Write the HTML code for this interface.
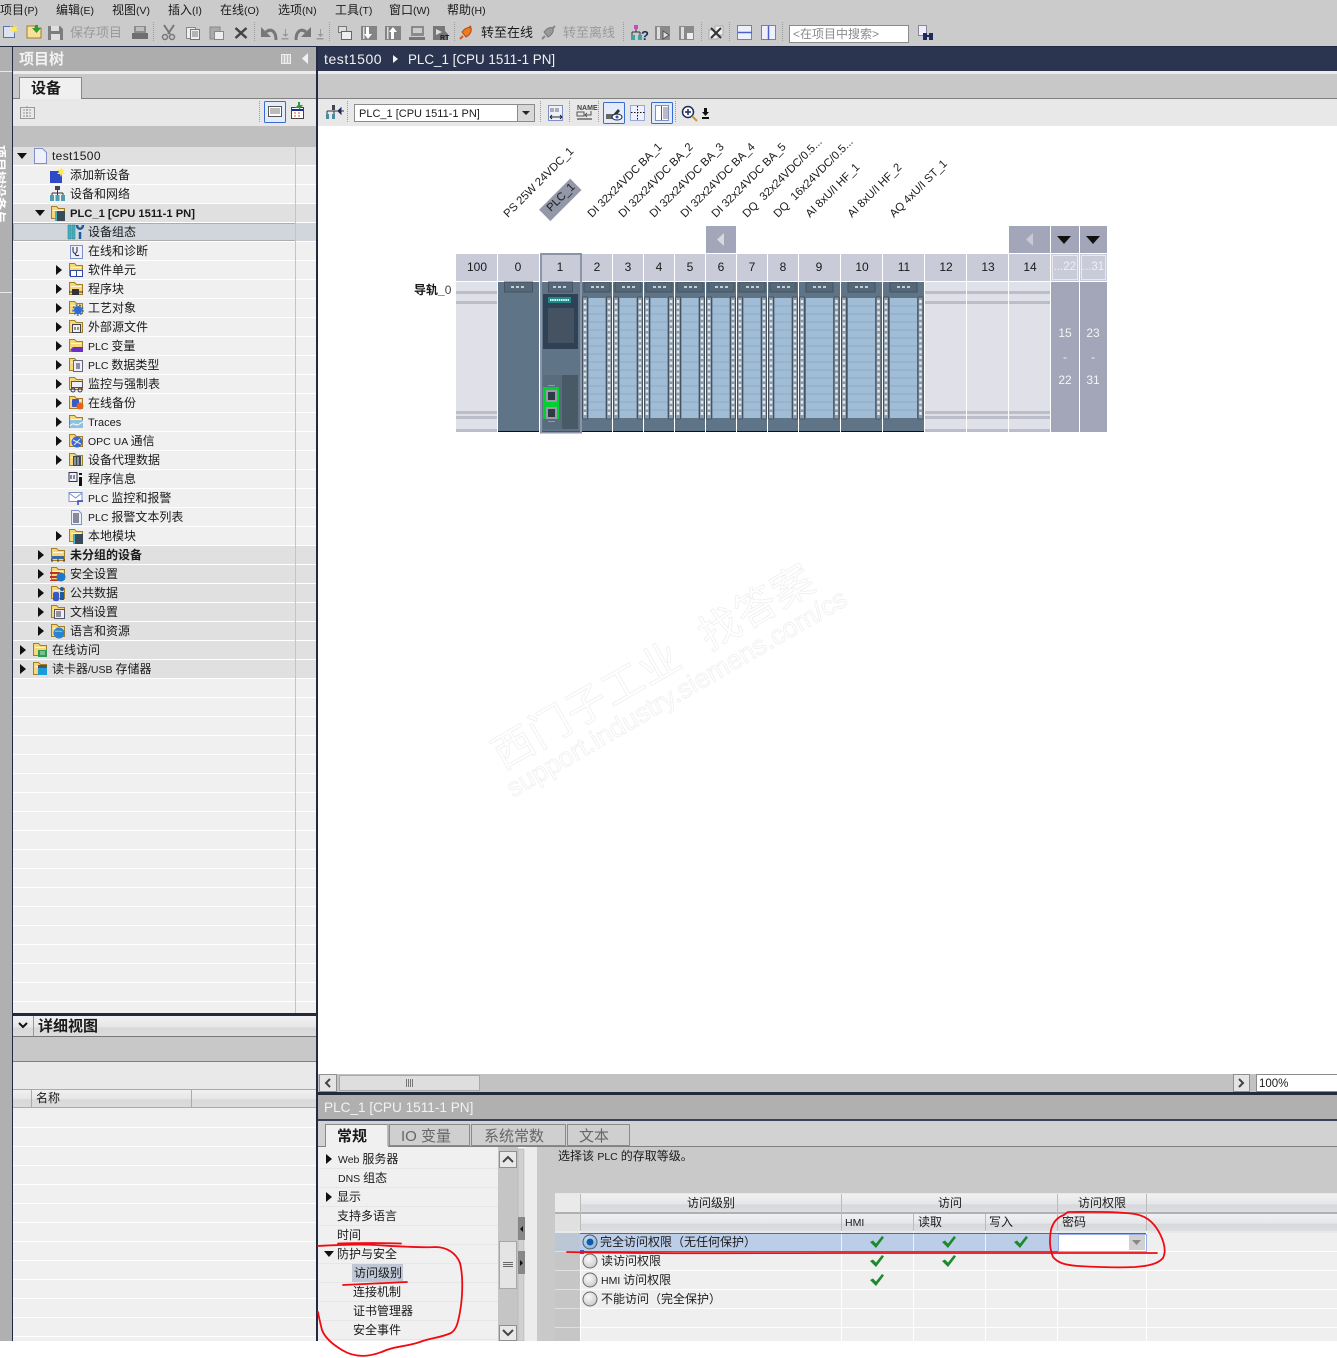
<!DOCTYPE html>
<html lang="zh"><head><meta charset="utf-8"><title>TIA Portal</title>
<style>
html,body{margin:0;padding:0;background:#fff;width:1337px;height:1358px;overflow:hidden}
svg{display:block}
text{font-family:"Liberation Sans","WenQuanYi Zen Hei","Noto Sans CJK SC",sans-serif;font-size:12px;fill:#1a1a1a}
tspan.n{font-size:10.5px}
.m{font-size:12px}
.m tspan{font-size:10.5px}
.g{fill:#9a9a9a;font-size:13px}
.b{font-size:13px}
.h{font-weight:bold;font-size:15px;fill:#f2f2f2}
.l{font-size:11.3px}
.c{text-anchor:middle}
.w{fill:#f2f2f2}
.r{font-size:12px}
</style></head><body>
<svg xmlns="http://www.w3.org/2000/svg" width="1337" height="1358" viewBox="0 0 1337 1358">
<defs>
<clipPath id="sc"><rect x="0" y="47" width="7" height="1294"/></clipPath>
<linearGradient id="hg" x1="0" y1="0" x2="0" y2="1"><stop offset="0" stop-color="#f0f1f3"/><stop offset=".55" stop-color="#e4e6e9"/><stop offset=".6" stop-color="#d6d8dc"/><stop offset="1" stop-color="#dcdee1"/></linearGradient>
<linearGradient id="hb" x1="0" y1="0" x2="0" y2="1"><stop offset="0" stop-color="#f2f2f2"/><stop offset=".55" stop-color="#e6e6e6"/><stop offset=".6" stop-color="#d8d8d8"/><stop offset="1" stop-color="#dcdcdc"/></linearGradient>
<radialGradient id="rd" cx=".4" cy=".35" r=".8"><stop offset="0" stop-color="#fafafa"/><stop offset="1" stop-color="#c2c2c2"/></radialGradient>
<radialGradient id="rs" cx=".4" cy=".35" r=".8"><stop offset="0" stop-color="#cfe4f7"/><stop offset="1" stop-color="#7aa7d0"/></radialGradient>
<symbol id="fo" viewBox="0 0 16 16" width="16" height="16"><path d="M1.500 1.500h5l2 2h6v10h-13z" fill="#f6d87a" stroke="#a47e26"/><path d="M3 5h10v1H3z" fill="#fff6d8"/></symbol>
<symbol id="ar" viewBox="0 0 6 10" width="6" height="10"><path d="M0 0l6 5-6 5z" fill="#111"/></symbol>
<symbol id="ad" viewBox="0 0 10 6" width="10" height="6"><path d="M0 0h10l-5 6z" fill="#111"/></symbol>
<symbol id="ck" viewBox="0 0 14 12" width="14" height="12"><path d="M0 6l3-1.500 3 3L12 0l2 1.500L6 12z" fill="#1c8a2c"/></symbol>
<symbol id="sm" viewBox="0 0 30 150" width="30" height="150">
<rect width="30" height="150" fill="#5f7486"/><rect x="2" y="0" width="26" height="10" fill="#546879" stroke="#44535f"/>
<path d="M9 5h3M14 5h3M19 5h3" stroke="#c4ccd4" stroke-width="2"/>
<rect x=".5" y="15" width="5" height="122" rx="1" fill="#8b9bab" stroke="#44535f"/><rect x="24.500" y="15" width="5" height="122" rx="1" fill="#8b9bab" stroke="#44535f"/>
<path d="M3 18v116M27 18v116" stroke="#e2e7eb" stroke-width="2.500" stroke-dasharray="3 2.600"/>
<rect x="6.500" y="16" width="17" height="120" fill="#a1bdd6"/>
<path d="M6.500 24h17M6.500 32h17M6.500 40h17M6.500 48h17M6.500 56h17M6.500 64h17M6.500 72h17M6.500 80h17M6.500 88h17M6.500 96h17M6.500 104h17M6.500 112h17M6.500 120h17M6.500 128h17" stroke="#8cabc6"/>
<rect y="149" width="30" height="1" fill="#111"/></symbol>
<symbol id="sw" viewBox="0 0 41 150" width="41" height="150">
<rect width="41" height="150" fill="#5f7486"/><rect x="7" y="0" width="27" height="10" fill="#546879" stroke="#44535f"/>
<path d="M14 5h3M19 5h3M24 5h3" stroke="#c4ccd4" stroke-width="2"/>
<rect x=".5" y="15" width="5" height="122" rx="1" fill="#8b9bab" stroke="#44535f"/><rect x="35" y="15" width="5" height="122" rx="1" fill="#8b9bab" stroke="#44535f"/>
<path d="M3 18v116M37.500 18v116" stroke="#e2e7eb" stroke-width="2.500" stroke-dasharray="3 2.600"/>
<rect x="7" y="16" width="27" height="120" fill="#a1bdd6"/>
<path d="M7 24h27M7 32h27M7 40h27M7 48h27M7 56h27M7 64h27M7 72h27M7 80h27M7 88h27M7 96h27M7 104h27M7 112h27M7 120h27M7 128h27" stroke="#8cabc6"/>
<rect y="149" width="41" height="1" fill="#111"/></symbol>
<symbol id="se" viewBox="0 0 41 150" width="41" height="150"><rect width="41" height="150" fill="#dfe0e8"/><path d="M0 10.500h41M0 20.500h41M0 130.500h41M0 135.500h41M0 148.500h41" stroke="#bcbdca" stroke-width="3"/></symbol>
</defs>

<!-- top bars -->
<rect width="1337" height="46" fill="#cbcbcb"/>
<text class="m" x="0" y="14">项目<tspan>(P)</tspan></text><text class="m" x="56" y="14">编辑<tspan>(E)</tspan></text><text class="m" x="112" y="14">视图<tspan>(V)</tspan></text><text class="m" x="168" y="14">插入<tspan>(I)</tspan></text><text class="m" x="220" y="14">在线<tspan>(O)</tspan></text><text class="m" x="278" y="14">选项<tspan>(N)</tspan></text><text class="m" x="335" y="14">工具<tspan>(T)</tspan></text><text class="m" x="389" y="14">窗口<tspan>(W)</tspan></text><text class="m" x="447" y="14">帮助<tspan>(H)</tspan></text>

<!-- toolbar icons -->
<path d="M3.500 26.500h11v11h-11z" fill="#dbe3f5" stroke="#5b6fb8"/><path d="M14 24l1 3 3-1-2 3 2 2-3 0-1 3-1-3-3 0 2-2-2-3 3 1z" fill="#ffe94d"/>
<path d="M27 26h7l2 2h5v10H27z" fill="#f7e09a" stroke="#a47e26"/><path d="M35 25h3v3h3l-4.500 5-4.500-5h3z" fill="#2f9a35"/>
<path d="M48 26h12l3 3v11H48z" fill="#7d7d7d"/><rect x="51" y="26" width="8" height="5" fill="#dedede"/><rect x="51" y="34" width="9" height="6" fill="#dedede"/>
<text class="g" x="70" y="37">保存项目</text>
<rect x="134" y="26" width="12" height="7" fill="#8d8d8d"/><rect x="132" y="33" width="16" height="6" fill="#6f6f6f"/><path d="M136 28h8M136 30h8" stroke="#eee"/>
<path d="M153.500 22v20M254.500 22v20M329.500 22v20M454.500 22v20M623.500 22v20M701.500 22v20M729.500 22v20M782.500 22v20" stroke="#9c9c9c" stroke-dasharray="1 1"/>
<path d="M164 25l6 9M174 25l-6 9" stroke="#777" stroke-width="2"/><circle cx="165" cy="37" r="2.500" fill="none" stroke="#777" stroke-width="1.500"/><circle cx="172" cy="37" r="2.500" fill="none" stroke="#777" stroke-width="1.500"/>
<rect x="186.500" y="27.500" width="9" height="11" fill="#eee" stroke="#888"/><rect x="190.500" y="29.500" width="9" height="10" fill="#eee" stroke="#777"/><path d="M192 32h6M192 34h6M192 36h6" stroke="#777"/>
<rect x="210" y="27" width="10" height="12" fill="#aaa" stroke="#888"/><rect x="214.500" y="31.500" width="9" height="8" fill="#eee" stroke="#888"/>
<path d="M235.500 28l11 10M246.500 28l-11 10" stroke="#444" stroke-width="2.500"/>
<path d="M261 27v10h10z" fill="#777"/><path d="M266 32c5-4 10-1 10 8" stroke="#777" stroke-width="3" fill="none"/><path d="M285 29v5h-2.500l3 3 3-3H286v-5zM281.500 38h7v1.500h-7z" fill="#999"/>
<path d="M311 27v10h-10z" fill="#777"/><path d="M306 32c-5-4-10-1-10 8" stroke="#777" stroke-width="3" fill="none"/><path d="M320 29v5h-2.500l3 3 3-3H321v-5zM316.500 38h7v1.500h-7z" fill="#999"/>
<rect x="338.500" y="26.500" width="8" height="6" fill="#ddd" stroke="#777"/><rect x="341.500" y="31.500" width="10" height="8" fill="#eee" stroke="#666"/>
<rect x="361" y="26" width="16" height="14" fill="#848484"/><path d="M366 27h3v7h3l-4 5-4-5h2z" fill="#fff"/><rect x="363" y="27" width="1.500" height="12" fill="#ddd"/>
<rect x="385" y="26" width="16" height="14" fill="#848484"/><path d="M391 39h3v-7h3l-4-5-4 5h2z" fill="#fff"/><rect x="387" y="27" width="1.500" height="12" fill="#ddd"/>
<rect x="411" y="26" width="13" height="10" fill="#8a8a8a"/><rect x="413" y="28" width="9" height="5" fill="#ccc"/><rect x="409" y="37" width="16" height="3" fill="#777"/>
<path d="M433 26h12v5l3 3v6H433z" fill="#777"/><path d="M436 29l6 3-6 3z" fill="#ddd"/><text x="440" y="40" style="font-size:7px;font-weight:bold" fill="#222">RT</text>
<path d="M460 39l3-3M471 26l-3 3" stroke="#d85a10" stroke-width="2"/><path d="M462 32c3-4 6-5 9-4 1 3-1 7-5 9z" fill="#f07a20" stroke="#b34a10"/>
<text class="b" x="481" y="37">转至在线</text>
<path d="M542 39l3-3M555 26l-3 3" stroke="#888" stroke-width="2"/><path d="M544 32c3-4 6-5 9-4 1 3-1 7-5 9z" fill="#999" stroke="#777"/>
<text class="g" x="563" y="37">转至离线</text>
<rect x="634" y="25" width="4" height="4" fill="#c44fc4"/><path d="M636 29v3M632 32h8M632 32v3M640 32v3" stroke="#333"/><rect x="631" y="35" width="4" height="5" fill="#3aa5a5"/><rect x="638" y="35" width="4" height="5" fill="#3aa5a5"/><text x="641" y="40" style="font-size:13px;font-weight:bold;fill:#1d2a5a">?</text>
<rect x="655" y="26" width="15" height="14" fill="#8a8a8a"/><rect x="657" y="27" width="3" height="12" fill="#ddd"/><path d="M663 31l6 4-6 4z" fill="#ddd" stroke="#555"/>
<rect x="679" y="26" width="15" height="14" fill="#8a8a8a"/><rect x="681" y="27" width="3" height="12" fill="#ddd"/><rect x="687" y="33" width="6" height="6" fill="#eee"/>
<rect x="709" y="30" width="9" height="9" fill="#eee" stroke="#aaa"/><rect x="715" y="26" width="8" height="9" fill="#eee" stroke="#aaa"/><path d="M711 28l10 10M721 28l-10 10" stroke="#333" stroke-width="2"/>
<rect x="737.500" y="25.500" width="14" height="14" fill="#eef1fb" stroke="#6b7ed0"/><path d="M738 32.500h14" stroke="#4a5fc8" stroke-width="1.500"/>
<rect x="761.500" y="25.500" width="14" height="14" fill="#eef1fb" stroke="#6b7ed0"/><path d="M768.500 26v14" stroke="#4a5fc8" stroke-width="1.500"/>
<rect x="789.500" y="25.500" width="119" height="17" fill="#fff" stroke="#8b8b8b"/><text x="793" y="38" style="fill:#8a8a8a;font-size:12px">&lt;在项目中搜索&gt;</text>
<rect x="918.500" y="25.500" width="8" height="10" fill="#eef" stroke="#889"/><path d="M923 33h4v7h-4zM929 33h4v7h-4z" fill="#1d2a5a"/><rect x="926" y="35" width="4" height="2" fill="#1d2a5a"/>

<!-- dark top line -->
<rect y="46" width="1337" height="1" fill="#232a40"/>

<!-- left strip -->
<rect x="0" y="47" width="12" height="1294" fill="#b0b0b0"/><rect x="12" y="47" width="1" height="1294" fill="#232a40"/>
<rect x="0" y="71" width="12" height="1" fill="#e8e8e8"/><rect x="0" y="292" width="12" height="1" fill="#e8e8e8"/>
<g clip-path="url(#sc)"><g transform="translate(-5,145) rotate(90)"><text y="0" x="0" style="font-size:13px;font-weight:bold;fill:#fff">项目树设备与</text></g></g>

<!-- project tree header -->
<rect x="13" y="47" width="303" height="24" fill="#adadad"/>
<text class="h" x="19" y="64">项目树</text>
<rect x="281.500" y="54.500" width="9" height="9" fill="#c8c8c8" stroke="#eee"/><path d="M284.500 55v8M287.500 55v8" stroke="#eee"/>
<path d="M308 53v11l-6-5.500z" fill="#f2f2f2"/>
<rect x="13" y="71" width="303" height="3" fill="#ececec"/>
<rect x="13" y="74" width="303" height="24" fill="#c8c8c8"/>
<path d="M19.500 98V77.500h62V98" fill="#f0f0f0" stroke="#8a8a8a"/>
<text x="31" y="93" style="font-size:15px;font-weight:bold">设备</text>
<rect x="13" y="98" width="303" height="1" fill="#808080"/><rect x="20" y="98" width="61" height="1" fill="#f0f0f0"/>
<rect x="13" y="99" width="303" height="27" fill="#e8e8e8"/>
<rect x="20.500" y="107.500" width="14" height="11" fill="#e8e8e8" stroke="#999"/><path d="M23 110h9M23 113h9M23 116h9M27 106v12" stroke="#999" stroke-dasharray="2 1"/>
<rect x="264.500" y="101.500" width="21" height="21" rx="1" fill="#e3ecfa" stroke="#3a6bd0"/><rect x="268.500" y="106.500" width="13" height="10" fill="#fff" stroke="#555"/><path d="M270 109h10M270 111h10M270 113h10" stroke="#777"/>
<path d="M259.500 101v22" stroke="#999" stroke-dasharray="1 1"/>
<rect x="291.500" y="107.500" width="12" height="11" fill="#fff" stroke="#444"/><path d="M292 110h11" stroke="#1d2a9a" stroke-width="2"/><path d="M294 113h2M298 113h2M294 116h2M298 116h2" stroke="#d85a10"/><path d="M298 102h2v3h3l-4 5 0-2-4 0 3-3z" fill="#2f9a35"/>
<rect x="13" y="126" width="303" height="21" fill="#c0c0c0"/>

<!-- tree rows -->
<rect x="13" y="147" width="303" height="866" fill="#f0f0f0"/>
<g fill="#e0e0e0"><rect x="13" y="147" width="303" height="18"/><rect x="13" y="204" width="303" height="18"/>
<rect x="13" y="546" width="303" height="18"/><rect x="13" y="565" width="303" height="18"/><rect x="13" y="584" width="303" height="18"/><rect x="13" y="603" width="303" height="18"/><rect x="13" y="622" width="303" height="18"/><rect x="13" y="641" width="303" height="18"/><rect x="13" y="660" width="303" height="18"/></g>
<rect x="13.500" y="223.500" width="282" height="17" fill="#d0d6dc"/><rect x="296" y="223" width="20" height="18" fill="#d0d6dc"/><rect x="13.500" y="223.500" width="282" height="17" fill="none" stroke="#777" stroke-dasharray="1 1"/>
<path d="M13 165.500h303M13 184.500h303M13 203.500h303M13 222.500h303M13 241.500h303M13 260.500h303M13 279.500h303M13 298.500h303M13 317.500h303M13 336.500h303M13 355.500h303M13 374.500h303M13 393.500h303M13 412.500h303M13 431.500h303M13 450.500h303M13 469.500h303M13 488.500h303M13 507.500h303M13 526.500h303M13 545.500h303M13 564.500h303M13 583.500h303M13 602.500h303M13 621.500h303M13 640.500h303M13 659.500h303M13 678.500h303M13 697.500h303M13 716.500h303M13 735.500h303M13 754.500h303M13 773.500h303M13 792.500h303M13 811.500h303M13 830.500h303M13 849.500h303M13 868.500h303M13 887.500h303M13 906.500h303M13 925.500h303M13 944.500h303M13 963.500h303M13 982.500h303M13 1001.500h303" stroke="#fff"/>
<rect x="295" y="147" width="1" height="866" fill="#c4c4c4"/>

<!-- arrows -->
<use href="#ad" x="17" y="153"/><use href="#ad" x="35" y="210"/>
<use href="#ar" x="56" y="265"/><use href="#ar" x="56" y="284"/><use href="#ar" x="56" y="303"/><use href="#ar" x="56" y="322"/><use href="#ar" x="56" y="341"/><use href="#ar" x="56" y="360"/><use href="#ar" x="56" y="379"/><use href="#ar" x="56" y="398"/><use href="#ar" x="56" y="417"/><use href="#ar" x="56" y="436"/><use href="#ar" x="56" y="455"/><use href="#ar" x="56" y="531"/>
<use href="#ar" x="38" y="550"/><use href="#ar" x="38" y="569"/><use href="#ar" x="38" y="588"/><use href="#ar" x="38" y="607"/><use href="#ar" x="38" y="626"/><use href="#ar" x="20" y="645"/><use href="#ar" x="20" y="664"/>

<!-- tree icons -->
<path d="M34.500 148.500h8l4 4v11h-12z" fill="#eef1fb" stroke="#7f8fc8"/>
<rect x="50" y="171" width="12" height="12" fill="#2f49c8"/><path d="M61 167l1 3 3-1-2 3 2 2-3 0-1 3-1-3-3 0 2-2-2-3 3 1z" fill="#ffe94d"/>
<rect x="55" y="186" width="5" height="4" fill="#445"/><path d="M57.500 190v3M52 193h11M52 193v2M57.500 193v2M63 193v2" stroke="#333"/><rect x="50" y="195" width="4" height="6" fill="#4aa0b0"/><rect x="55.500" y="195" width="4" height="6" fill="#4aa0b0"/><rect x="61" y="195" width="4" height="6" fill="#4aa0b0"/>
<use href="#fo" x="50" y="205"/><rect x="55" y="211" width="10" height="10" fill="#3b4a58"/><rect x="55" y="211" width="2" height="10" fill="#46b0c0"/>
<rect x="68" y="225" width="3" height="14" fill="#46b0c0" stroke="#2a7080" stroke-width=".5"/><rect x="72" y="225" width="3" height="14" fill="#46b0c0" stroke="#2a7080" stroke-width=".5"/><path d="M80 232v7M77 225c0 5 6 5 6 0" stroke="#1d5aa0" stroke-width="2.500" fill="none"/>
<rect x="70.500" y="245.500" width="12" height="13" fill="#eef1fb" stroke="#7f8fc8"/><path d="M73 247v4c0 3 4 3 4 0v-4M75 253c0 3 3 3 4 2" stroke="#223" fill="none"/>
<use href="#fo" x="68" y="262"/><rect x="70.500" y="270.500" width="6" height="6" fill="#fff" stroke="#2f49a8"/><rect x="76.500" y="270.500" width="6" height="6" fill="#fff" stroke="#2f49a8"/>
<use href="#fo" x="68" y="281"/><rect x="72" y="289" width="7" height="6" fill="#333"/><path d="M69 292h14" stroke="#333"/>
<use href="#fo" x="68" y="300"/><circle cx="78" cy="310" r="4" fill="#2f6ad0"/><circle cx="78" cy="310" r="5" fill="none" stroke="#2f6ad0" stroke-dasharray="2 1.500" stroke-width="1.500"/>
<use href="#fo" x="68" y="319"/><rect x="72.500" y="324.500" width="8" height="8" fill="#eee" stroke="#444"/><path d="M75 327v3M78 327v3" stroke="#333"/>
<use href="#fo" x="68" y="338"/><path d="M73 347h6l4 0v5h-10l-3-2z" fill="#6a2fc0"/>
<use href="#fo" x="68" y="357"/><rect x="73.500" y="360.500" width="9" height="11" fill="#eef" stroke="#667"/><path d="M77 363v6M79 363v6" stroke="#334"/>
<use href="#fo" x="68" y="376"/><rect x="71.500" y="381.500" width="11" height="6" fill="#eef" stroke="#556"/><circle cx="73" cy="390" r="2" fill="none" stroke="#335"/><circle cx="80" cy="390" r="2" fill="none" stroke="#335"/>
<use href="#fo" x="68" y="395"/><rect x="72" y="399" width="7" height="8" rx="1" fill="#3a58c8"/><circle cx="80" cy="406" r="3.500" fill="#e8601c"/>
<use href="#fo" x="68" y="414"/><rect x="70" y="420" width="13" height="8" fill="#8fc0e0"/><path d="M70 426c3-4 5-1 7-1 2 0 3-2 6-3" stroke="#fff" fill="none"/>
<use href="#fo" x="68" y="433"/><circle cx="77" cy="442" r="5.500" fill="#3a68d0"/><path d="M73 440l8 4M74 445l6-6" stroke="#dfe8f8"/>
<use href="#fo" x="68" y="452"/><rect x="73" y="456" width="8" height="10" fill="#3b4a58"/><path d="M75 457v8M78 457v8" stroke="#dcdcdc"/>
<rect x="69" y="472.500" width="8" height="9" fill="#eef" stroke="#334"/><path d="M71 475v4M74 475v4" stroke="#223"/><rect x="79" y="477" width="3" height="9" fill="#111"/><rect x="79" y="473" width="3" height="2" fill="#111"/>
<path d="M69 492.500h13v9H69z" fill="#fff" stroke="#7f8fc8"/><path d="M69 493l6.500 5 6.500-5" stroke="#7f8fc8" fill="none"/><path d="M78 505v-4h5" stroke="#2f49c8" fill="none" stroke-width="1.500"/>
<path d="M71.500 510.500h7l3 3v11h-10z" fill="#eef1fb" stroke="#7f8fc8"/><path d="M73 514h6M73 516h6M73 518h6M73 520h6M73 522h6" stroke="#223"/>
<use href="#fo" x="68" y="528"/><rect x="73" y="534" width="10" height="10" fill="#3b4a58"/><rect x="73" y="534" width="2" height="10" fill="#46b0c0"/>
<use href="#fo" x="50" y="547"/><rect x="52" y="556" width="12" height="3" fill="#3a6aa0"/><path d="M52 559v3M58 559v3M64 559v3" stroke="#333"/>
<use href="#fo" x="50" y="566"/><path d="M50 572h10v2H50zM50 576h10v2H50zM50 580h10v1H50z" fill="#b8322a"/><circle cx="61" cy="577" r="4.500" fill="#1d7ac8"/>
<use href="#fo" x="50" y="585"/><rect x="53" y="592" width="6" height="9" rx="2" fill="#3a58c8"/><circle cx="62" cy="589" r="2" fill="#1d5aa0"/><rect x="60" y="592" width="4" height="8" fill="#1d5aa0"/>
<use href="#fo" x="50" y="604"/><rect x="54.500" y="609.500" width="10" height="9" fill="#eef" stroke="#556"/><path d="M56 612h5M56 614h5M56 616h5" stroke="#334"/>
<use href="#fo" x="50" y="623"/><circle cx="59" cy="633" r="5.500" fill="#2a82d0"/><path d="M55 631c2 1 5-1 7 1" stroke="#8fd8a0" fill="none"/>
<use href="#fo" x="32" y="642"/><rect x="38" y="650" width="9" height="7" fill="#2f9a55"/><path d="M40 652h5M40 654h5" stroke="#bfe8c8"/>
<use href="#fo" x="32" y="661"/><rect x="38" y="665" width="9" height="3" fill="#555"/><rect x="38" y="668" width="9" height="7" fill="#1d9ad8"/>

<!-- tree text -->
<text class="r" x="52" y="160" style="letter-spacing:.35px">test1500</text>
<text class="r" x="70" y="179">添加新设备</text><text class="r" x="70" y="198">设备和网络</text>
<text class="r" x="70" y="217" style="font-size:11.2px;font-weight:bold">PLC_1 [CPU 1511-1 PN]</text>
<text class="r" x="88" y="236">设备组态</text><text class="r" x="88" y="255">在线和诊断</text><text class="r" x="88" y="274">软件单元</text><text class="r" x="88" y="293">程序块</text><text class="r" x="88" y="312">工艺对象</text><text class="r" x="88" y="331">外部源文件</text><text class="r" x="88" y="350"><tspan class="n">PLC </tspan>变量</text><text class="r" x="88" y="369"><tspan class="n">PLC </tspan>数据类型</text><text class="r" x="88" y="388">监控与强制表</text><text class="r" x="88" y="407">在线备份</text><text class="r" x="88" y="426" style="font-size:11px">Traces</text><text class="r" x="88" y="445"><tspan class="n">OPC UA </tspan>通信</text><text class="r" x="88" y="464">设备代理数据</text><text class="r" x="88" y="483">程序信息</text><text class="r" x="88" y="502"><tspan class="n">PLC </tspan>监控和报警</text><text class="r" x="88" y="521"><tspan class="n">PLC </tspan>报警文本列表</text><text class="r" x="88" y="540">本地模块</text>
<text class="r" x="70" y="559" style="font-weight:bold">未分组的设备</text><text class="r" x="70" y="578">安全设置</text><text class="r" x="70" y="597">公共数据</text><text class="r" x="70" y="616">文档设置</text><text class="r" x="70" y="635">语言和资源</text>
<text class="r" x="52" y="654">在线访问</text><text class="r" x="52" y="673">读卡器<tspan class="n">/USB </tspan>存储器</text>

<!-- detail view -->
<rect x="13" y="1013" width="305" height="3" fill="#232a40"/>
<rect x="13" y="1016" width="303" height="20" fill="url(#hb)"/><rect x="33" y="1016" width="1" height="20" fill="#999"/>
<path d="M19 1023l4 4 4-4" stroke="#111" stroke-width="2" fill="none"/>
<text x="38" y="1031" style="font-size:15px;font-weight:bold">详细视图</text>
<rect x="13" y="1036" width="303" height="25" fill="#c8c8c8"/><rect x="13" y="1036" width="303" height="1" fill="#777"/><rect x="13" y="1061" width="303" height="1" fill="#808080"/>
<rect x="13" y="1062" width="303" height="27" fill="#e9e9e9"/>
<rect x="13" y="1089" width="303" height="18" fill="url(#hb)"/><path d="M13 1089.500h303M13 1107.500h303" stroke="#aaa"/><path d="M31.500 1089v18M191.500 1089v18" stroke="#aaa"/>
<text x="36" y="1102">名称</text>
<rect x="13" y="1108" width="303" height="233" fill="#f0f0f0"/>
<path d="M13 1127.500h303M13 1146.500h303M13 1165.500h303M13 1184.500h303M13 1203.500h303M13 1222.500h303M13 1241.500h303M13 1260.500h303M13 1279.500h303M13 1298.500h303M13 1317.500h303M13 1336.500h303" stroke="#fff"/>

<!-- vertical divider -->
<rect x="316" y="47" width="2" height="1294" fill="#232a40"/>

<!-- editor header -->
<rect x="318" y="47" width="1019" height="24" fill="#2b3550"/>
<text x="324" y="64" style="font-size:14px;fill:#f2f2f2;letter-spacing:.55px">test1500</text><path d="M393 55l5 4-5 4z" fill="#f2f2f2"/><text x="408" y="64" style="font-size:13.4px;fill:#f2f2f2">PLC_1 [CPU 1511-1 PN]</text>
<rect x="318" y="71" width="1019" height="3" fill="#ececec"/>
<rect x="318" y="74" width="1019" height="24" fill="#c8c8c8"/><rect x="318" y="98" width="1019" height="1" fill="#808080"/>
<rect x="318" y="99" width="1019" height="27" fill="#e8e8e8"/>
<!-- editor toolbar -->
<rect x="332" y="105" width="3" height="5" fill="#445"/><path d="M327 111h14M327 111v3M334 111v3M341 111v3" stroke="#333"/><rect x="326" y="114" width="3" height="5" fill="#4a8a9a"/><rect x="332" y="114" width="3" height="5" fill="#4a8a9a"/><path d="M344 111h-6l3-3v6l-3-3" fill="#1d2a5a" stroke="#1d2a5a"/>
<path d="M347.500 101v22M540.500 101v22M569.500 101v22M598.500 101v22M675.500 101v22" stroke="#999" stroke-dasharray="1 1"/>
<rect x="354.500" y="104.500" width="180" height="17" fill="#fff" stroke="#8b8b8b"/>
<text x="359" y="117" style="font-size:11px">PLC_1 [CPU 1511-1 PN]</text>
<rect x="518" y="105" width="16" height="16" fill="#d8d8d8"/><rect x="517.500" y="104.500" width="17" height="17" fill="none" stroke="#8b8b8b"/><path d="M522 111h8l-4 4z" fill="#222"/>
<rect x="548.500" y="105.500" width="14" height="15" fill="#eef1fb" stroke="#7f8fc8"/><path d="M551 108v4M553 108v4M556 108v4M558 108v4" stroke="#667"/><path d="M550 117h12M550 117l2-2M550 117l2 2M562 117l-2-2M562 117l-2 2" stroke="#222" fill="none"/>
<text x="577" y="110" style="font-size:7px;font-weight:bold;fill:#444">NAME</text><path d="M577 112h7v4h-7zM591 111v4h-6l2-2M585 115l2 2" fill="none" stroke="#555"/><rect x="577" y="118" width="15" height="2" fill="#888"/>
<rect x="603.500" y="102.500" width="21" height="21" rx="1" fill="#e3ecfa" stroke="#3a6bd0"/><path d="M606 117l6-1 6-7 2 2-6 7z" fill="#333"/><rect x="606" y="114" width="12" height="5" fill="#666"/><ellipse cx="617" cy="117" rx="5" ry="3" fill="#fff" stroke="#223"/><circle cx="617" cy="117" r="1.500" fill="#1d5ad0"/>
<rect x="630.500" y="105.500" width="14" height="15" fill="#eef1fb" stroke="#9aa7d8"/><path d="M631 112.500h14M637.500 106v15" stroke="#111" stroke-dasharray="1.500 1.500"/>
<rect x="651.500" y="102.500" width="21" height="21" rx="1" fill="#e3ecfa" stroke="#3a6bd0"/><rect x="655.500" y="105.500" width="13" height="15" fill="#fff" stroke="#7f8fc8"/><path d="M661.500 106v14" stroke="#556"/><path d="M663 108h5M663 110h5M663 112h5M663 114h5M663 116h5M663 118h5" stroke="#778"/>
<circle cx="688" cy="112" r="5.500" fill="#fff" stroke="#1d2a5a" stroke-width="1.500"/><path d="M685 112h6M688 109v6" stroke="#1d2a5a" stroke-width="1.500"/><path d="M692 116l5 5" stroke="#c89a30" stroke-width="2"/>
<path d="M704 108h3v4h2l-3.500 4-3.500-4h2zM702 117h7v2h-7z" fill="#111"/>

<!-- canvas -->
<rect x="318" y="126" width="1019" height="948" fill="#fff"/>

<!-- watermark -->
<g transform="translate(503,770) rotate(-30)"><text style="font-size:41px;fill:#fff;stroke:#efefef;stroke-width:.8;letter-spacing:1px">西门子工业</text><text x="238" style="font-size:41px;fill:#fff;stroke:#efefef;stroke-width:.8;letter-spacing:1px">找答案</text></g>
<g transform="translate(513,798) rotate(-30)"><text style="font-size:26.8px;fill:#fff;stroke:#efefef;stroke-width:.8">support.industry.siemens.com/cs</text></g>

<!-- rotated labels -->
<g>
<rect x="-21" y="-10" width="44" height="16" transform="translate(561,202) rotate(-45)" fill="#9398a8"/>
<text class="l" transform="translate(508,218) rotate(-45)">PS 25W 24VDC_1</text>
<text class="l" transform="translate(551,212) rotate(-45)">PLC_1</text>
<text class="l" transform="translate(592,218) rotate(-45)">DI 32x24VDC BA_1</text>
<text class="l" transform="translate(623,218) rotate(-45)">DI 32x24VDC BA_2</text>
<text class="l" transform="translate(654,218) rotate(-45)">DI 32x24VDC BA_3</text>
<text class="l" transform="translate(685,218) rotate(-45)">DI 32x24VDC BA_4</text>
<text class="l" transform="translate(716,218) rotate(-45)">DI 32x24VDC BA_5</text>
<text class="l" style="word-spacing:4px" transform="translate(747,218) rotate(-45)">DQ 32x24VDC/0.5...</text>
<text class="l" style="word-spacing:4px" transform="translate(778,218) rotate(-45)">DQ 16x24VDC/0.5...</text>
<text class="l" transform="translate(810,218) rotate(-45)">AI 8xU/I HF_1</text>
<text class="l" transform="translate(852,218) rotate(-45)">AI 8xU/I HF_2</text>
<text class="l" transform="translate(894,218) rotate(-45)">AQ 4xU/I ST_1</text>
</g>

<!-- nav arrows above rack -->
<rect x="706" y="226" width="30" height="27" fill="#a3a6b8"/><path d="M724 233v13l-7-6.500z" fill="#d8d9e0"/>
<rect x="1009" y="226" width="41" height="27" fill="#a3a6b8"/><path d="M1033 233v13l-7-6.500z" fill="#c8c9d4"/>
<rect x="1051" y="226" width="28" height="27" fill="#a3a6b8"/><path d="M1057 236h14l-7 8z" fill="#111"/>
<rect x="1080" y="226" width="27" height="27" fill="#a3a6b8"/><path d="M1086 236h14l-7 8z" fill="#111"/>

<!-- slot headers -->
<g fill="#c9cbd8">
<rect x="456" y="254" width="41" height="27"/><rect x="498" y="254" width="41" height="27"/><rect x="541" y="254" width="39" height="27"/><rect x="582" y="254" width="30" height="27"/><rect x="613" y="254" width="30" height="27"/><rect x="644" y="254" width="30" height="27"/><rect x="675" y="254" width="30" height="27"/><rect x="706" y="254" width="30" height="27"/><rect x="737" y="254" width="30" height="27"/><rect x="768" y="254" width="30" height="27"/><rect x="799" y="254" width="41" height="27"/><rect x="841" y="254" width="41" height="27"/><rect x="883" y="254" width="41" height="27"/><rect x="925" y="254" width="41" height="27"/><rect x="967" y="254" width="41" height="27"/><rect x="1009" y="254" width="41" height="27"/><rect x="1051" y="254" width="28" height="27"/><rect x="1080" y="254" width="27" height="27"/></g>
<g>
<text class="c" x="477" y="271">100</text><text class="c" x="518" y="271">0</text><text class="c" x="560" y="271">1</text><text class="c" x="597" y="271">2</text><text class="c" x="628" y="271">3</text><text class="c" x="659" y="271">4</text><text class="c" x="690" y="271">5</text><text class="c" x="721" y="271">6</text><text class="c" x="752" y="271">7</text><text class="c" x="783" y="271">8</text><text class="c" x="819" y="271">9</text><text class="c" x="862" y="271">10</text><text class="c" x="904" y="271">11</text><text class="c" x="946" y="271">12</text><text class="c" x="988" y="271">13</text><text class="c" x="1030" y="271">14</text></g>
<rect x="1052.500" y="255.500" width="25" height="24" fill="none" stroke="#e8e8ee"/><rect x="1081.500" y="255.500" width="24" height="24" fill="none" stroke="#e8e8ee"/>
<text class="c" x="1065" y="270" style="fill:#eef;font-size:11.5px">...22</text><text class="c" x="1093" y="270" style="fill:#eef;font-size:11.5px">...31</text>

<text x="414" y="294" style="font-weight:bold;font-size:12px">导轨_<tspan style="font-weight:normal;fill:#444">0</tspan></text>

<!-- rack body -->
<use href="#se" x="456" y="282"/>
<rect x="498" y="282" width="41" height="150" fill="#5f7486"/><rect x="504.500" y="282" width="28" height="10" fill="#546879" stroke="#44535f"/><path d="M511 287h3M516 287h3M521 287h3" stroke="#c4ccd4" stroke-width="2"/><rect x="498" y="431" width="41" height="1" fill="#111"/>
<rect x="541" y="282" width="39" height="150" fill="#5f7486"/><rect x="548.500" y="282" width="24" height="10" fill="#546879" stroke="#44535f"/><path d="M553 287h3M558 287h3M563 287h3" stroke="#c4ccd4" stroke-width="2"/>
<rect x="543" y="294" width="35" height="55" fill="#2f4155"/><rect x="548" y="297" width="23" height="6" fill="#1f8a8a"/><path d="M550 300h19" stroke="#dff" stroke-dasharray="1.500 .7" stroke-width="2"/><rect x="548" y="308" width="26" height="35" fill="#445262"/>
<rect x="562" y="375" width="16" height="54" fill="#4a5966"/><rect x="543" y="375" width="19" height="54" fill="#586c7d"/>
<rect x="543" y="387" width="16" height="32" fill="#00d030"/><rect x="546" y="390" width="11" height="12" fill="#9a9ba8"/><rect x="548" y="392" width="7" height="8" fill="#2f3a45"/><rect x="546" y="407" width="11" height="12" fill="#9a9ba8"/><rect x="548" y="409" width="7" height="8" fill="#2f3a45"/>
<path d="M548 385.500h7M548 421.500h7" stroke="#99a"/>
<rect x="541" y="431" width="39" height="1" fill="#111"/>
<rect x="541" y="254" width="40" height="178.500" fill="none" stroke="#8a96a8" stroke-width="2"/>
<use href="#sm" x="582" y="282"/><use href="#sm" x="613" y="282"/><use href="#sm" x="644" y="282"/><use href="#sm" x="675" y="282"/><use href="#sm" x="706" y="282"/><use href="#sm" x="737" y="282"/><use href="#sm" x="768" y="282"/>
<use href="#sw" x="799" y="282"/><use href="#sw" x="841" y="282"/><use href="#sw" x="883" y="282"/>
<use href="#se" x="925" y="282"/><use href="#se" x="967" y="282"/><use href="#se" x="1009" y="282"/>
<rect x="1051" y="282" width="28" height="150" fill="#a3a6b8"/><rect x="1080" y="282" width="27" height="150" fill="#a3a6b8"/>
<g><text class="c" x="1065" y="337" style="fill:#f4f4f8">15</text><text class="c" x="1065" y="361" style="fill:#f4f4f8">-</text><text class="c" x="1065" y="384" style="fill:#f4f4f8">22</text><text class="c" x="1093" y="337" style="fill:#f4f4f8">23</text><text class="c" x="1093" y="361" style="fill:#f4f4f8">-</text><text class="c" x="1093" y="384" style="fill:#f4f4f8">31</text></g>

<!-- horizontal scrollbar -->
<rect x="318" y="1074" width="1019" height="18" fill="#c2c2c2"/>
<rect x="319.500" y="1074.500" width="17" height="17" fill="#e4e4e4" stroke="#8f8f8f"/><path d="M330 1079l-4 4 4 4" stroke="#444" stroke-width="2" fill="none"/>
<rect x="339.500" y="1075.500" width="140" height="15" fill="#dedede" stroke="#a8a8a8"/><path d="M406.500 1079v8M408.500 1079v8M410.500 1079v8M412.500 1079v8" stroke="#777"/>
<rect x="1233.500" y="1074.500" width="16" height="17" fill="#e4e4e4" stroke="#8f8f8f"/><path d="M1239 1079l4 4-4 4" stroke="#444" stroke-width="2" fill="none"/>
<rect x="1256.500" y="1074.500" width="82" height="17" fill="#fff" stroke="#8b8b8b"/><text x="1259" y="1087" style="font-size:11.5px">100%</text>

<!-- inspector -->
<rect x="318" y="1092" width="1019" height="3" fill="#232a40"/>
<rect x="318" y="1095" width="1019" height="24" fill="#b0b0b0"/><text x="324" y="1112" style="font-size:13.6px;fill:#f2f2f2">PLC_1 [CPU 1511-1 PN]</text>
<rect x="318" y="1119" width="1019" height="2" fill="#3a4258"/>
<rect x="318" y="1121" width="1019" height="25" fill="#d2d2d2"/><rect x="318" y="1146" width="1019" height="1" fill="#808080"/>
<path d="M325.500 1147v-22.500h62.500v22.500" fill="#f0f0f0" stroke="#8a8a8a"/><rect x="326" y="1146" width="62" height="2" fill="#f0f0f0"/>
<rect x="389.500" y="1124.500" width="80" height="21" fill="#cfcfcf" stroke="#8a8a8a"/><rect x="471.500" y="1124.500" width="94" height="21" fill="#cfcfcf" stroke="#8a8a8a"/><rect x="567.500" y="1124.500" width="62" height="21" fill="#cfcfcf" stroke="#8a8a8a"/>
<text x="337" y="1141" style="font-size:15px;font-weight:bold">常规</text>
<text x="401" y="1141" style="font-size:15px;fill:#666">IO 变量</text><text x="484" y="1141" style="font-size:15px;fill:#666">系统常数</text><text x="579" y="1141" style="font-size:15px;fill:#666">文本</text>

<!-- nav -->
<rect x="318" y="1147" width="180" height="194" fill="#f0f0f0"/>
<path d="M319 1168.500h179M319 1187.500h179M319 1206.500h179M319 1225.500h179M319 1244.500h179M319 1263.500h179M319 1282.500h179M319 1301.500h179M319 1320.500h179M319 1339.500h179" stroke="#e6e6e6"/>
<rect x="352" y="1264" width="51" height="18" fill="#c0c8d6"/>
<use href="#ar" x="326" y="1154"/><use href="#ar" x="326" y="1192"/><use href="#ad" x="324" y="1251"/>
<text x="338" y="1163"><tspan class="n">Web </tspan>服务器</text><text x="338" y="1182"><tspan class="n">DNS </tspan>组态</text><text x="337" y="1201">显示</text><text x="337" y="1220">支持多语言</text><text x="337" y="1239">时间</text><text x="337" y="1258">防护与安全</text><text x="354" y="1277">访问级别</text><text x="353" y="1296">连接机制</text><text x="353" y="1315">证书管理器</text><text x="353" y="1334">安全事件</text>
<!-- nav scrollbar -->
<rect x="498" y="1147" width="20" height="194" fill="#c5c5c5"/>
<rect x="499.500" y="1151.500" width="17" height="16" fill="#e8e8e8" stroke="#8f8f8f"/><path d="M503 1162l5-5 5 5" stroke="#444" stroke-width="2" fill="none"/>
<rect x="499.500" y="1241.500" width="17" height="47" fill="#e4e4e4" stroke="#a8a8a8"/><path d="M503 1262.500h10M503 1264.500h10M503 1266.500h10" stroke="#666"/>
<rect x="499.500" y="1325.500" width="17" height="15" fill="#e8e8e8" stroke="#8f8f8f"/><path d="M503 1330l5 5 5-5" stroke="#444" stroke-width="2" fill="none"/>
<rect x="518" y="1149" width="6" height="192" fill="#d0d0d0" stroke="#bbb"/><rect x="518" y="1217" width="7" height="23" fill="#888"/><rect x="518" y="1251" width="7" height="23" fill="#888"/>
<path d="M523 1226v6l-3-3z" fill="#111"/><path d="M520 1260v6l3-3z" fill="#111"/>
<rect x="525" y="1147" width="12" height="194" fill="#ececec"/>
<!-- content -->
<rect x="537" y="1147" width="800" height="194" fill="#c9c9c9"/>
<text x="558" y="1160">选择该 <tspan class="n">PLC </tspan>的存取等级。</text>

<!-- table -->
<rect x="555" y="1194" width="25" height="147" fill="#c6c6c6"/>
<rect x="555" y="1194" width="25" height="18" fill="#eaeaea"/><rect x="555" y="1214" width="25" height="17" fill="#e0e0e0"/>
<rect x="580" y="1194" width="757" height="18" fill="url(#hg)"/><rect x="580" y="1214" width="757" height="17" fill="url(#hg)"/>
<rect x="555" y="1212" width="782" height="2" fill="#b0b0b0"/><rect x="555" y="1231" width="782" height="2" fill="#e8e8e8"/>
<rect x="555" y="1193" width="782" height="1" fill="#e8e8e8"/>
<rect x="580" y="1233" width="757" height="108" fill="#efefef"/>
<path d="M580 1251.500h757M580 1270.500h757M580 1289.500h757M580 1308.500h757M580 1327.500h757" stroke="#fff"/>
<path d="M555 1251.500h25M555 1270.500h25M555 1289.500h25M555 1308.500h25M555 1327.500h25" stroke="#e0e0e0"/>
<path d="M580.500 1194v147M841.500 1194v147M1057.500 1194v147M1146.500 1194v147" stroke="#fff"/>
<path d="M913.500 1214v127M985.500 1214v127" stroke="#fff"/>
<path d="M580.500 1194v37M841.500 1194v37M1057.500 1194v37M1146.500 1194v37M913.500 1214v17M985.500 1214v17" stroke="#bbb"/>
<rect x="555" y="1233" width="25" height="18" fill="#bcc7d6"/>
<rect x="580" y="1233" width="478" height="18" fill="#bccde8"/>
<path d="M580 1233.500h566M580 1251.500h478" stroke="#3a6bd0"/>
<path d="M841.500 1234v17M913.500 1234v17M985.500 1234v17" stroke="#eef2fa"/>
<rect x="1058" y="1234" width="88" height="17" fill="#fff"/><rect x="1129" y="1235" width="16" height="15" fill="#d0d0d0"/><path d="M1132 1240h9l-4.500 5z" fill="#888"/>
<rect x="1058.500" y="1234.500" width="88" height="17" fill="none" stroke="#2f5fd0" stroke-dasharray="1 1"/>
<rect x="580" y="1250" width="4" height="4" fill="#2f5fd0"/>
<text class="c" x="711" y="1207">访问级别</text><text class="c" x="950" y="1207">访问</text><text class="c" x="1102" y="1207">访问权限</text>
<text x="845" y="1226" style="font-size:10.5px">HMI</text><text x="918" y="1226">读取</text><text x="989" y="1226">写入</text><text x="1062" y="1226">密码</text>
<circle cx="590" cy="1242" r="7" fill="url(#rs)" stroke="#5a5a5a"/><circle cx="590" cy="1242" r="3.500" fill="#0f5ab0"/>
<circle cx="590" cy="1261" r="7" fill="url(#rd)" stroke="#6a6a6a"/><circle cx="590" cy="1280" r="7" fill="url(#rd)" stroke="#6a6a6a"/><circle cx="590" cy="1299" r="7" fill="url(#rd)" stroke="#6a6a6a"/>
<text x="600" y="1246">完全访问权限（无任何保护）</text><text x="601" y="1265">读访问权限</text><text x="601" y="1284"><tspan class="n">HMI </tspan>访问权限</text><text x="601" y="1303">不能访问（完全保护）</text>
<use href="#ck" x="870" y="1236"/><use href="#ck" x="942" y="1236"/><use href="#ck" x="1014" y="1236"/><use href="#ck" x="870" y="1255"/><use href="#ck" x="942" y="1255"/><use href="#ck" x="870" y="1274"/>

<!-- bottom white -->
<rect y="1341" width="1337" height="17" fill="#fff"/>

<!-- red annotations -->
<g fill="none" stroke="#f00b14" stroke-width="1.800" stroke-linecap="round" stroke-linejoin="round">
<path d="M338 1243.500C360 1243 385 1243 401 1243.500"/>
<path d="M318 1246C335 1245 360 1244 376 1245S420 1248 435 1247C447 1247 456 1253 460 1263C463 1275 463 1295 460 1312C458 1322 457 1329 451 1333C440 1338 430 1338 420 1342C405 1347 395 1346 384 1351C370 1357 355 1358 342 1350C332 1344 325 1338 322 1330C320 1322 319 1318 318 1312"/>
<path d="M343 1285C365 1284 385 1283 407 1282"/>
<path d="M567 1252C650 1254 750 1253 840 1253C950 1253 1060 1254 1157 1253"/>
<path d="M1062 1216C1066 1214 1066 1213 1068 1212C1085 1212 1115 1211 1135 1214C1147 1216 1155 1224 1160 1234C1165 1244 1166 1252 1163 1258C1158 1264 1148 1266 1135 1267C1115 1268 1095 1267 1078 1266C1065 1265 1058 1263 1053 1257C1050 1250 1049 1240 1051 1230C1053 1222 1058 1217 1064 1215"/>
</g>
</svg>
</body></html>
